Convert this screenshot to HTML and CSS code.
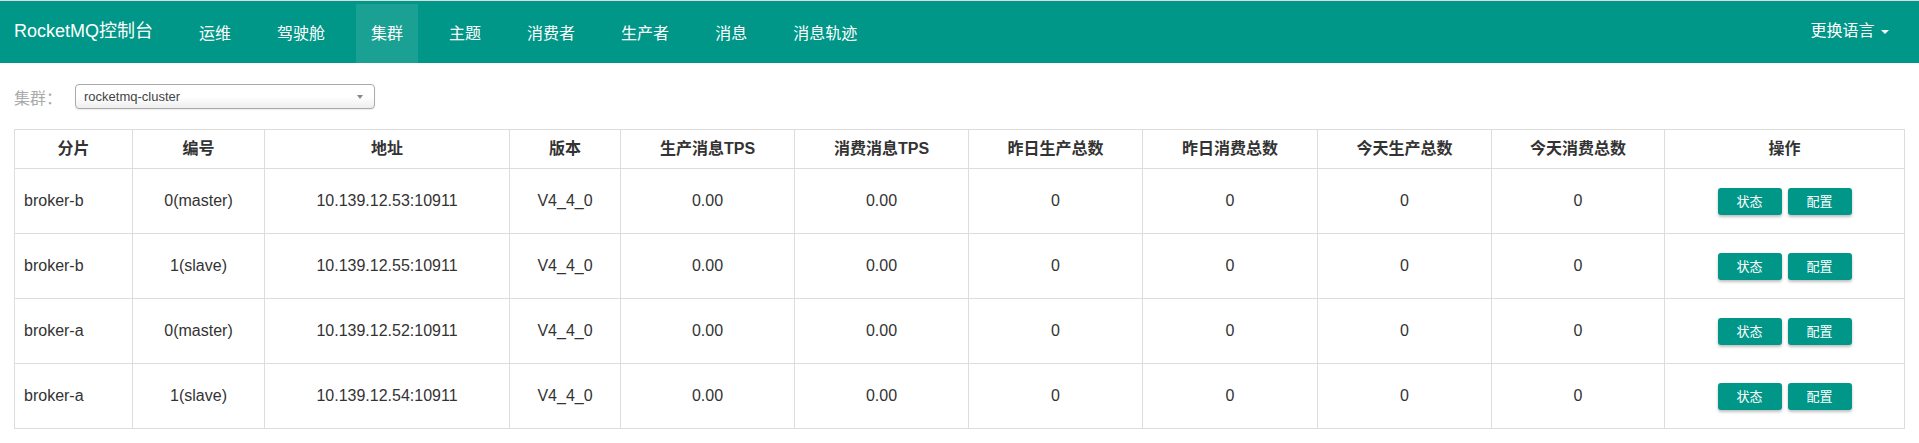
FILE: index.html
```html
<!DOCTYPE html>
<html lang="zh-CN">
<head>
<meta charset="utf-8">
<title>RocketMQ控制台</title>
<link rel="stylesheet" href="styles.css">
</head>
<body>
<nav class="navbar">
  <a class="brand">RocketMQ控制台</a>
  <ul class="nav-items">
    <li><a>运维</a></li>
    <li><a>驾驶舱</a></li>
    <li class="active"><a>集群</a></li>
    <li><a>主题</a></li>
    <li><a>消费者</a></li>
    <li><a>生产者</a></li>
    <li><a>消息</a></li>
    <li><a>消息轨迹</a></li>
  </ul>
  <a class="lang">更换语言 <span class="caret"></span></a>
</nav>
<main class="content">
  <div class="filter">
    <label class="filter-label">集群：</label>
    <div class="select">
      <span class="select-text">rocketmq-cluster</span>
      <span class="select-arrow"></span>
    </div>
  </div>
  <table class="grid">
    <colgroup>
      <col class="c1"><col class="c2"><col class="c3"><col class="c4"><col class="c5"><col class="c6"><col class="c7"><col class="c8"><col class="c9"><col class="c10"><col class="c11">
    </colgroup>
    <thead>
      <tr>
        <th>分片</th><th>编号</th><th>地址</th><th>版本</th><th>生产消息TPS</th><th>消费消息TPS</th><th>昨日生产总数</th><th>昨日消费总数</th><th>今天生产总数</th><th>今天消费总数</th><th>操作</th>
      </tr>
    </thead>
    <tbody>
      <tr>
        <td class="left">broker-b</td><td>0(master)</td><td>10.139.12.53:10911</td><td>V4_4_0</td><td>0.00</td><td>0.00</td><td>0</td><td>0</td><td>0</td><td>0</td>
        <td><div class="actions"><button class="btn">状态</button><button class="btn">配置</button></div></td>
      </tr>
      <tr>
        <td class="left">broker-b</td><td>1(slave)</td><td>10.139.12.55:10911</td><td>V4_4_0</td><td>0.00</td><td>0.00</td><td>0</td><td>0</td><td>0</td><td>0</td>
        <td><div class="actions"><button class="btn">状态</button><button class="btn">配置</button></div></td>
      </tr>
      <tr>
        <td class="left">broker-a</td><td>0(master)</td><td>10.139.12.52:10911</td><td>V4_4_0</td><td>0.00</td><td>0.00</td><td>0</td><td>0</td><td>0</td><td>0</td>
        <td><div class="actions"><button class="btn">状态</button><button class="btn">配置</button></div></td>
      </tr>
      <tr>
        <td class="left">broker-a</td><td>1(slave)</td><td>10.139.12.54:10911</td><td>V4_4_0</td><td>0.00</td><td>0.00</td><td>0</td><td>0</td><td>0</td><td>0</td>
        <td><div class="actions"><button class="btn">状态</button><button class="btn">配置</button></div></td>
      </tr>
    </tbody>
  </table>
</main>
</body>
</html>
```

FILE: styles.css
```css
* { box-sizing: border-box; }
html, body { margin: 0; padding: 0; background: #fff; }
body {
  font-family: "Liberation Sans", "Noto Sans CJK SC", sans-serif;
  font-size: 16px;
  color: #333;
}

.navbar {
  display: flex;
  align-items: flex-start;
  height: 63px;
  border-top: 1px solid #dcdcdc;
  background: #009688;
  padding: 0 30px 0 14px;
  color: #fff;
}
.brand {
  font-size: 18px;
  line-height: 60px;
  color: #fff;
  white-space: nowrap;
}
.nav-items {
  display: flex;
  list-style: none;
  margin: 3px 0 0 31px;
  padding: 0;
}
.nav-items li { margin-right: 16px; }
.nav-items a {
  display: block;
  padding: 0 15px;
  line-height: 59px;
  color: #fff;
  font-size: 16px;
  white-space: nowrap;
}
.nav-items li.active a { background: #1aa194; }
.lang {
  margin-left: auto;
  font-size: 16px;
  line-height: 60px;
  color: #fff;
  white-space: nowrap;
}
.caret {
  display: inline-block;
  width: 0;
  height: 0;
  margin-left: 2px;
  vertical-align: middle;
  border-top: 4px solid #fff;
  border-left: 4px solid transparent;
  border-right: 4px solid transparent;
}

.content { padding: 0 15px 0 14px; }
.filter {
  display: flex;
  align-items: center;
  margin-top: 21px;
  height: 25px;
}
.filter-label {
  color: #aaa;
  font-size: 16px;
  width: 61px;
}
.select {
  display: flex;
  align-items: center;
  width: 300px;
  height: 25px;
  border: 1px solid #aaa;
  border-radius: 4px;
  background: linear-gradient(to top, #eee 0%, #fff 50%);
  padding: 0 8px;
  box-shadow: 0 1px 1px rgba(0,0,0,0.08);
}
.select-text {
  font-size: 13px;
  color: #444;
  flex: 1;
}
.select-arrow {
  width: 0;
  height: 0;
  margin-right: 3px;
  border-top: 4px solid #888;
  border-left: 3px solid transparent;
  border-right: 3px solid transparent;
}

.grid {
  margin-top: 20px;
  width: 1890px;
  table-layout: fixed;
  border-collapse: collapse;
}
.c1 { width: 118px; }
.c2 { width: 132px; }
.c3 { width: 245px; }
.c4 { width: 111px; }
.c5 { width: 174px; }
.c6 { width: 174px; }
.c7 { width: 174px; }
.c8 { width: 175px; }
.c9 { width: 174px; }
.c10 { width: 173px; }
.c11 { width: 240px; }

.grid th, .grid td {
  border: 1px solid #ddd;
  text-align: center;
  vertical-align: middle;
}
.grid th {
  font-weight: bold;
  padding: 9px 8px;
  line-height: 20px;
  color: #333;
}
.grid td {
  height: 65px;
  padding: 0 9px;
  line-height: 20px;
  color: #333;
}
.grid td.left { text-align: left; }

.actions {
  display: flex;
  justify-content: center;
  gap: 6px;
}
.btn {
  width: 64px;
  height: 27px;
  padding: 0;
  border: 0;
  border-radius: 3px;
  background: #009688;
  color: #fff;
  font-family: "Liberation Sans", "Noto Sans CJK SC", sans-serif;
  font-size: 13px;
  line-height: 27px;
  box-shadow: 0 2px 3px rgba(0,0,0,0.25);
}
```
